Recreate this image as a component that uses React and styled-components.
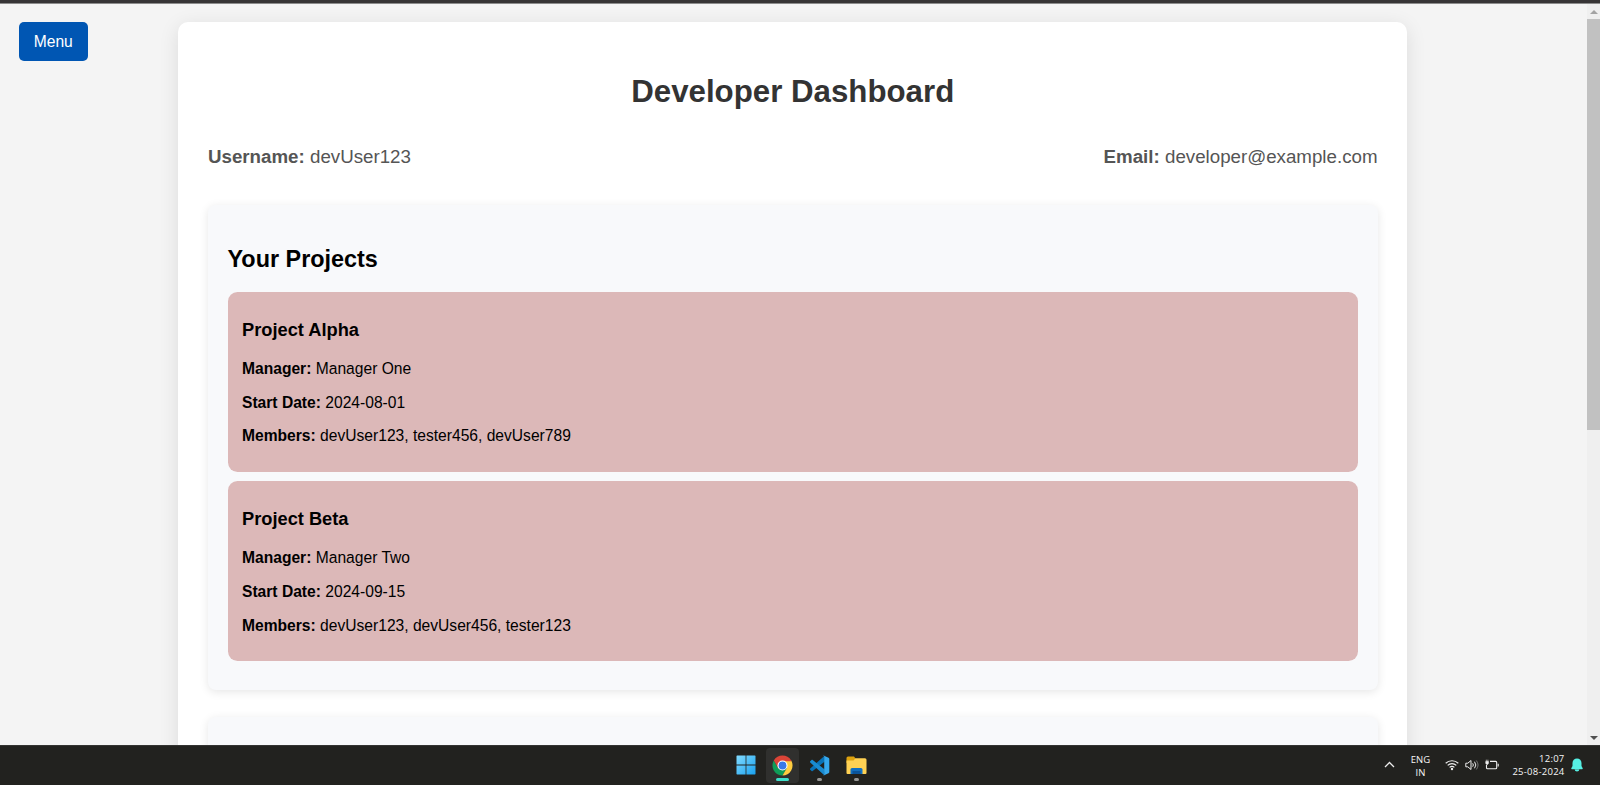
import React from "react";
import styled, { createGlobalStyle } from "styled-components";

const GlobalStyle = createGlobalStyle`
  * { box-sizing: border-box; }
  html, body { margin: 0; padding: 0; overflow: hidden; }
  body { font-family: "Liberation Sans", Arial, sans-serif; font-size: 15.62px; color: #000; }
  h1, h2, h3, p { margin: 0; }
`;

const Screen = styled.div`
  display: flex;
  flex-direction: column;
  width: 1600px;
  height: 785px;
  overflow: hidden;
`;

const WindowEdge = styled.div`
  flex: none;
  height: 4px;
  background: #373536;
  border-bottom: 1px solid #8c8c8c;
`;

const Viewport = styled.div`
  flex: 1;
  min-height: 0;
  display: flex;
  background: #f4f4f4;
  overflow: hidden;
`;

const Side = styled.aside`
  flex: none;
  width: 178px;
  padding: 18px 0 0 19px;
`;

const MenuButton = styled.button`
  display: block;
  width: 68.5px;
  height: 39px;
  padding: 0;
  border: 0;
  border-radius: 5px;
  background: #0056b3;
  color: #fff;
  font: 15.62px/38px "Liberation Sans", Arial, sans-serif;
`;

const Panel = styled.main`
  flex: none;
  align-self: flex-start;
  width: 1229px;
  height: 1100px;
  margin-top: 18px;
  padding: 50.5px 29.5px 0 30px;
  border-radius: 10px;
  background: #fff;
  box-shadow: 0 4px 20px rgba(0, 0, 0, 0.1);
`;

const Title = styled.h1`
  color: #333;
  text-align: center;
  font-size: 31.25px;
  line-height: 38px;
`;

const UserInfo = styled.div`
  display: flex;
  justify-content: space-between;
  margin-top: 35px;
  color: #555;
  font-size: 18.73px;
  line-height: 22px;
`;

const Section = styled.section`
  height: 485px;
  margin-top: ${(p) => p.$gap}px;
  padding: 40px 19.5px 0;
  border-radius: 8px;
  background: #f8f9fb;
  box-shadow: 0 2px 10px rgba(0, 0, 0, 0.1);
`;

const SectionTitle = styled.h2`
  font-size: 23.4px;
  line-height: 28px;
  margin-bottom: 19px;
`;

const ProjectCard = styled.article`
  height: 179.5px;
  margin-bottom: 9.7px;
  padding: 26.5px 14.5px 0;
  border-radius: 9.5px;
  background: #dcb8b8;
`;

const ProjectName = styled.h3`
  font-size: 18.25px;
  line-height: 22px;
  margin-bottom: 19.5px;
`;

const Detail = styled.p`
  line-height: 18px;
  margin-bottom: 15.7px;
`;

const Scrollbar = styled.div`
  margin-left: auto;
  flex: none;
  width: 13px;
  display: flex;
  flex-direction: column;
  align-items: center;
  background: #efefef;
`;

const Thumb = styled.div`
  width: 100%;
  height: 411px;
  background: #c1c1c1;
`;

const ArrowBox = styled.div`
  height: 15px;
  width: 100%;
  display: flex;
  justify-content: center;
  align-items: center;
  margin-top: ${(p) => (p.$bottom ? "auto" : 0)};
`;

const Taskbar = styled.footer`
  flex: none;
  height: 40px;
  display: grid;
  grid-template-columns: 1fr auto 1fr;
  background: #22221f;
  border-top: 1px solid #343432;
  color: #f5f5f5;
  font-family: "Open Sans", "Noto Sans", sans-serif;
`;

const Apps = styled.div`
  grid-column: 2;
  display: flex;
  gap: 3.7px;
  padding: 2px 0 0 2px;
`;

const AppSlot = styled.div`
  width: 33px;
  height: 35px;
  display: flex;
  flex-direction: column;
  align-items: center;
  justify-content: space-between;
  padding: 7px 0 2px;
  border-radius: 4px;
  background: ${(p) => (p.$active ? "#30302e" : "transparent")};
  svg { flex: none; }
`;

const Indicator = styled.span`
  width: ${(p) => (p.$active ? 13 : 5)}px;
  height: 3px;
  border-radius: 2px;
  background: ${(p) => (p.$active ? "#3ee0cb" : "#989896")};
`;

const Tray = styled.div`
  display: flex;
  align-items: center;
  justify-content: flex-end;
  padding-right: 17.5px;
  height: 38px;
`;

const TrayText = styled.div`
  width: ${(p) => p.$w}px;
  text-align: ${(p) => p.$align};
  margin: ${(p) => p.$drop || 0}px ${(p) => p.$after}px 0 ${(p) => p.$before}px;
  font-size: 9.5px;
  line-height: 13px;
  letter-spacing: ${(p) => p.$track || 0}px;
  white-space: nowrap;
`;

const TrayIcons = styled.div`
  display: flex;
  align-items: center;
  gap: 6px;
`;

const projects = [
  { name: "Project Alpha", manager: "Manager One", start: "2024-08-01", members: "devUser123, tester456, devUser789" },
  { name: "Project Beta", manager: "Manager Two", start: "2024-09-15", members: "devUser123, devUser456, tester123" },
];

const WindowsIcon = () => (
  <svg width="20" height="20" viewBox="0 0 20 20">
    <defs>
      <linearGradient id="win" x1="0" y1="0" x2="1" y2="1">
        <stop offset="0" stopColor="#83dcff" />
        <stop offset="1" stopColor="#18a0ee" />
      </linearGradient>
    </defs>
    <path fill="url(#win)" d="M1 .5h8.6v9H.5V1zM10.400.5h8.600l.5.5v8.500h-9.100zM.5 10.400h9.100v9.100H1l-.5-.5zM10.400 10.400h9.100v8.600l-.5.5h-8.600z" />
  </svg>
);

const ChromeIcon = () => (
  <svg width="21" height="21" viewBox="0 0 48 48">
    <path fill="#0f9d58" d="M4.100 12.500 14 29.800 24 34.500 33.800 30 24 47A23 23 0 0 1 4.100 12.500z" />
    <path fill="#ffcd40" d="M24 12.500h19.900A23 23 0 0 1 24 47l10-17.200z" />
    <path fill="#db4437" d="M24 24 14 29.800 4.100 12.500a23 23 0 0 1 39.800 0L44 14H24z" />
    <circle cx="24" cy="24" r="11.5" fill="#fff" />
    <circle cx="24" cy="24" r="9" fill="#3978e8" />
  </svg>
);

const CodeIcon = () => (
  <svg width="21" height="21" viewBox="0 0 24 24">
    <path fill="#0873b8" d="M17.500 1 1.400 15.500c-.4.4-.4.900 0 1.300l1.500 1.400c.4.300.9.400 1.300 0L18 7.500z" />
    <path fill="#198bd1" d="M17.500 23 1.400 8.500c-.4-.4-.4-.9 0-1.300l1.500-1.400c.4-.3.900-.4 1.300 0L18 16.500z" />
    <path fill="#35a9ee" d="M17.300.8 22.300 3.200c.5.200.9.700.9 1.300v15c0 .600-.4 1.100-.9 1.300l-5 2.400c-.6.300-1 .100-1.300-.2.900.4 1.400-.1 1.400-.7V1.700c0-.6-.5-1.100-1.400-.7.300-.3.700-.5 1.300-.2z" />
  </svg>
);

const FolderIcon = () => (
  <svg width="21" height="21" viewBox="0 0 21 21">
    <path fill="#dda20e" d="M.5 3Q.5 1.500 2 1.500h6l1.500 2V8h-9z" />
    <path fill="#ffd153" d="M.5 5.500h7l2-2.200h9.500q1.500 0 1.500 1.500V18q0 1-1 1h-18q-1 0-1-1z" />
    <path fill="#126fc0" d="M4.500 19v-4.500Q4.500 13 6 13h9q1.500 0 1.500 1.500V19z" />
    <path fill="#0b549a" d="M6.500 16h8v3h-8z" />
  </svg>
);

const ChevronIcon = () => (
  <svg width="11" height="8" viewBox="0 0 11 8" fill="none" stroke="#eee" strokeWidth="1.300">
    <path d="m1 6 4.500-4.500L10 6" />
  </svg>
);

const WifiIcon = () => (
  <svg width="14" height="12" viewBox="0 0 14 12" fill="none" stroke="#eee" strokeWidth="1.200">
    <path d="M.7 4.300a9 9 0 0 1 12.600 0M2.700 6.400a6.100 6.100 0 0 1 8.600 0M4.600 8.400a3.500 3.500 0 0 1 4.800 0" />
    <circle cx="7" cy="10" r="1.200" fill="#eee" stroke="none" />
  </svg>
);

const SoundIcon = () => (
  <svg width="14" height="12" viewBox="0 0 14 12" fill="none" stroke="#eee" strokeWidth="1">
    <path d="M.8 4.200h2L6 1.500v9L2.800 7.800h-2zM7.700 4.300q1.300 1.700 0 3.400M9.500 2.700q2.700 3.300 0 6.600" />
    <path stroke="#777" d="M11.300 1.500q3.500 4.500 0 9" />
  </svg>
);

const BatteryIcon = () => (
  <svg width="14" height="12" viewBox="0 0 14 12" fill="none" stroke="#eee" strokeWidth="1.100">
    <path d="M5 2.400h5.700q1 0 1 1v5.400q0 1-1 1H2.500q-1 0-1-1V6" />
    <path d="M13.200 4.800v2.600" />
    <path d="M.8 2.500h2.600v1.700q-.2 1.200-1.300 1.200T.8 4.200zM1.300.7v1.800M2.900.7v1.800" fill="#eee" strokeWidth=".7" />
  </svg>
);

const BellIcon = () => (
  <svg width="12" height="14" viewBox="0 0 12 14" fill="#56f0e4">
    <path d="M6 .5c2.600 0 4.500 1.900 4.500 4.400v3l1.200 2.300c.2.500-.1 1-.6 1H.9c-.5 0-.8-.5-.6-1l1.200-2.300v-3C1.500 2.400 3.400.5 6 .5zM3.700 11.500h4.600a2.300 2.100 0 0 1-4.600 0z" />
  </svg>
);

export default function App() {
  return (
    <Screen>
      <GlobalStyle />
      <WindowEdge />
      <Viewport>
        <Side>
          <MenuButton>Menu</MenuButton>
        </Side>
        <Panel>
          <Title>Developer Dashboard</Title>
          <UserInfo>
            <span><strong>Username:</strong> devUser123</span>
            <span><strong>Email:</strong> developer@example.com</span>
          </UserInfo>
          <Section $gap={37.5}>
            <SectionTitle>Your Projects</SectionTitle>
            {projects.map((project) => (
              <ProjectCard key={project.name}>
                <ProjectName>{project.name}</ProjectName>
                <Detail><strong>Manager:</strong> {project.manager}</Detail>
                <Detail><strong>Start Date:</strong> {project.start}</Detail>
                <Detail><strong>Members:</strong> {project.members}</Detail>
              </ProjectCard>
            ))}
          </Section>
          <Section $gap={27} />
        </Panel>
        <Scrollbar>
          <ArrowBox>
            <svg width="8" height="4" viewBox="0 0 8 4"><path fill="#a3a3a3" d="M0 4 4 0l4 4z" /></svg>
          </ArrowBox>
          <Thumb />
          <ArrowBox $bottom>
            <svg width="8" height="4" viewBox="0 0 8 4"><path fill="#505050" d="m0 0 4 4 4-4z" /></svg>
          </ArrowBox>
        </Scrollbar>
      </Viewport>
      <Taskbar>
        <Apps>
          <AppSlot><WindowsIcon /></AppSlot>
          <AppSlot $active><ChromeIcon /><Indicator $active /></AppSlot>
          <AppSlot><CodeIcon /><Indicator /></AppSlot>
          <AppSlot><FolderIcon /><Indicator /></AppSlot>
        </Apps>
        <Tray>
          <ChevronIcon />
          <TrayText $w={22} $align="center" $before={15} $after={13} $drop={2}>ENG<br />IN</TrayText>
          <TrayIcons><WifiIcon /><SoundIcon /><BatteryIcon /></TrayIcons>
          <TrayText $w={54} $align="right" $before={12} $after={6} $track={0.25}>12:07<br />25-08-2024</TrayText>
          <BellIcon />
        </Tray>
      </Taskbar>
    </Screen>
  );
}
